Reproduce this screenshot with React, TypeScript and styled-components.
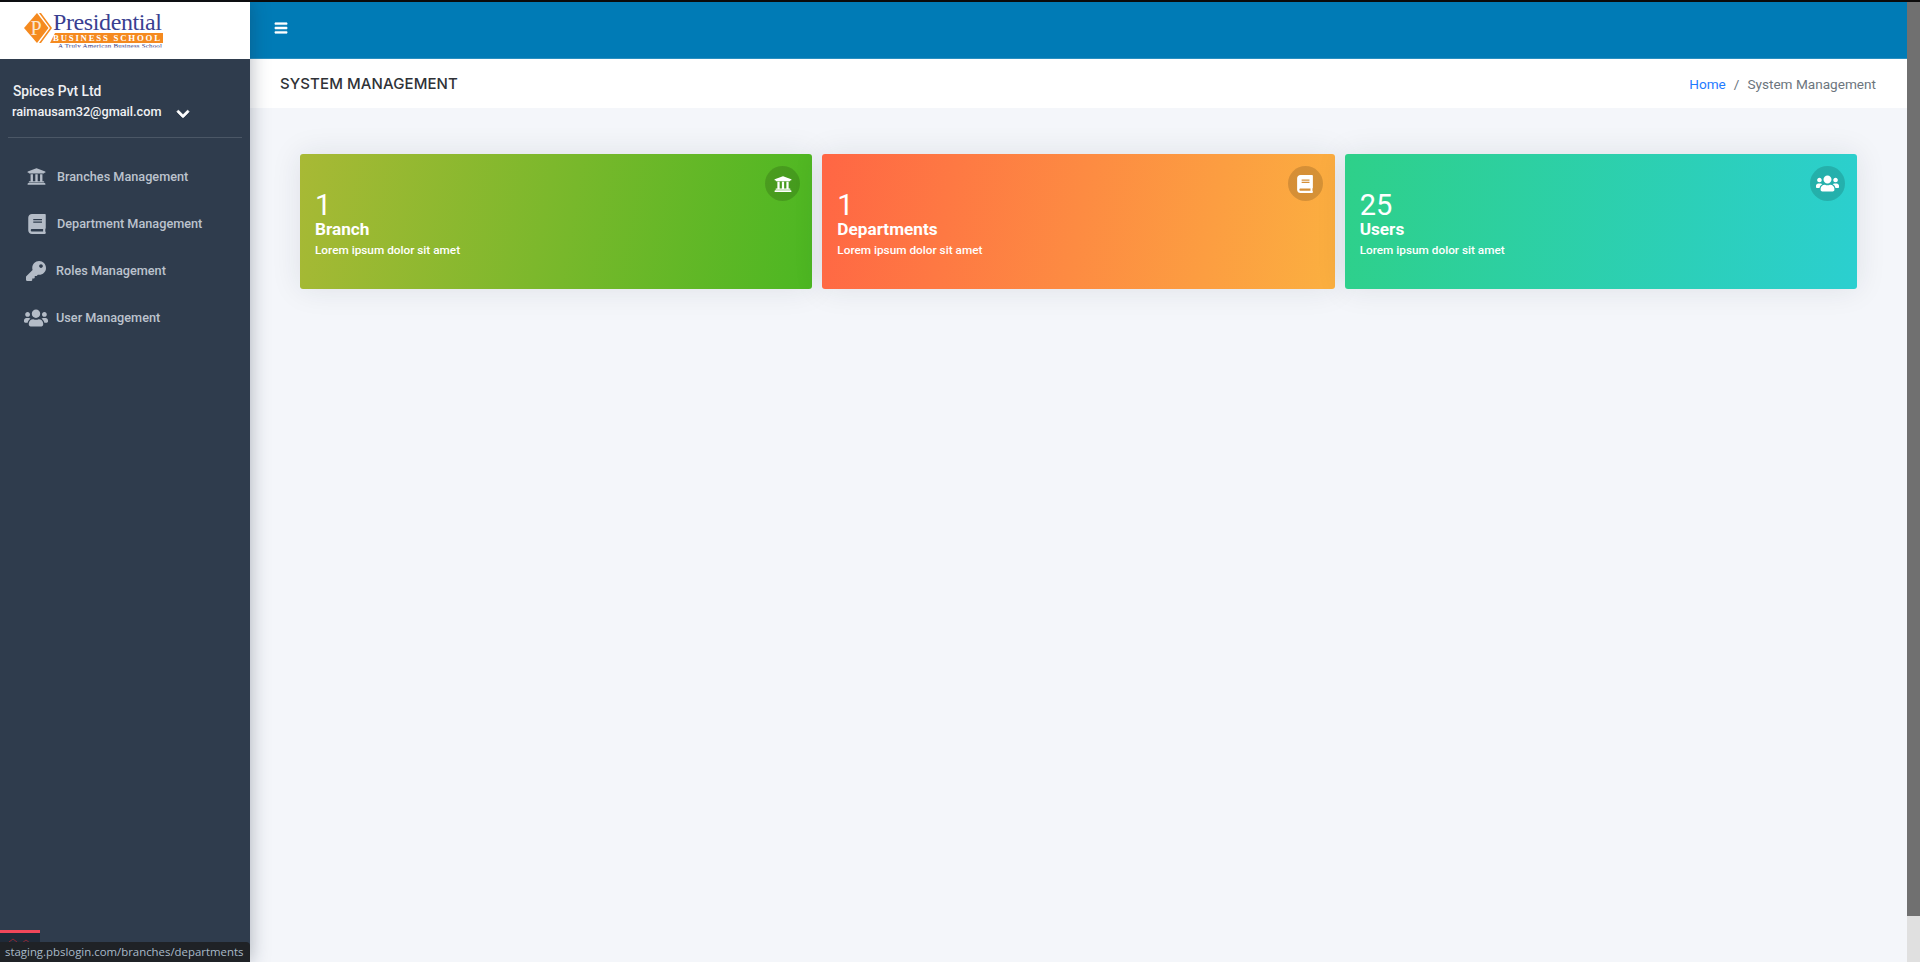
import React from "react";
import styled, { createGlobalStyle } from "styled-components";
import { FaBars, FaBook, FaChevronDown, FaKey, FaUniversity, FaUsers } from "react-icons/fa";
import type { IconType } from "react-icons";

const Global = createGlobalStyle`
  html, body { margin: 0; padding: 0; height: 100%; overflow: hidden; }
  body { font-family: "Roboto", "Liberation Sans", sans-serif; background: #000; }
  * { box-sizing: border-box; }
`;

const Frame = styled.div`
  height: 962px;
  display: flex;
  flex-direction: column;
  border-top: 2px solid #0b0b0b;
  position: relative;
`;
const Body = styled.div`
  flex: 1;
  display: flex;
  min-height: 0;
`;
const Sidebar = styled.aside`
  width: 250px;
  flex: none;
  background: #2f3c4d;
  box-shadow: 0 0 18px rgba(30, 40, 60, 0.35);
  position: relative;
  z-index: 2;
  display: flex;
  flex-direction: column;
`;
const LogoBar = styled.div`
  height: 57px;
  background: #fff;
  flex: none;
`;
const UserPanel = styled.div`
  margin: 0 8px;
  padding: 24px 4px 0 4px;
  height: 79px;
  border-bottom: 1px solid #4b5766;
  flex: none;
`;
const Company = styled.div`
  color: #eef0f3;
  font-size: 13.8px;
  font-weight: 500;
  line-height: 16px;
  padding-left: 1px;
`;
const EmailRow = styled.div`
  display: flex;
  align-items: center;
  margin-top: 3px;
  color: #f1f2f4;
  font-size: 12.7px;
  font-weight: 500;
  line-height: 16px;
  svg { margin-left: 15px; margin-top: 5px; font-size: 14px; color: #fff; stroke: #fff; stroke-width: 30px; }
`;
const Menu = styled.nav`
  padding-top: 15px;
  display: flex;
  flex-direction: column;
`;
const MenuItem = styled.a<{ $iconLeft: number; $gap: number }>`
  height: 47px;
  display: flex;
  align-items: center;
  padding-left: ${(p) => p.$iconLeft}px;
  gap: ${(p) => p.$gap}px;
  color: #bcc3cd;
  font-size: 12.7px;
  font-weight: 500;
`;
const MenuIcon = styled.span<{ $size: number }>`
  display: flex;
  font-size: ${(p) => p.$size}px;
  color: #b4bcc7;
`;

const Main = styled.main`
  flex: 1;
  min-width: 0;
  background: #f4f6fa;
  display: flex;
  flex-direction: column;
`;
const TopBar = styled.header`
  height: 57px;
  flex: none;
  background: #007bb6;
  border-bottom: 1px solid #2a8fc0;
  display: flex;
  align-items: center;
  padding-left: 24px;
  color: #fff;
  font-size: 14px;
  svg { display: block; margin-top: -4px; stroke: #fff; stroke-width: 20px; }
`;
const SubHeader = styled.div`
  height: 49px;
  flex: none;
  background: #fff;
  display: flex;
  align-items: center;
  justify-content: space-between;
  padding: 0 31px 0 30px;
`;
const PageTitle = styled.h1`
  margin: 0;
  font-family: "Inter", "Liberation Sans", sans-serif;
  font-size: 15px;
  font-weight: 500;
  color: #2f3237;
  letter-spacing: 0.1px;
`;
const Crumbs = styled.div`
  display: flex;
  gap: 8px;
  font-size: 13.6px;
  color: #6c757d;
`;
const CrumbLink = styled.a`
  color: #1f7bff;
`;
const Cards = styled.section`
  display: grid;
  grid-template-columns: repeat(3, 1fr);
  gap: 10px;
  padding: 46px 50px 0;
`;
const Card = styled.article<{ $from: string; $to: string }>`
  height: 135px;
  border-radius: 3px;
  background: linear-gradient(100deg, ${(p) => p.$from}, ${(p) => p.$to});
  box-shadow: 0 0 30px rgba(30, 35, 60, 0.1);
  color: #fff;
  padding: 37px 15px 0;
  position: relative;
`;
const Count = styled.div`
  font-size: 29px;
  line-height: 28px;
  font-weight: 400;
`;
const CardTitle = styled.div`
  font-size: 17.2px;
  line-height: 20px;
  font-weight: 700;
`;
const CardText = styled.div`
  font-size: 11.8px;
  line-height: 16px;
  font-weight: 500;
  margin-top: 3px;
`;
const Badge = styled.div`
  position: absolute;
  top: 12px;
  right: 12px;
  width: 35px;
  height: 35px;
  border-radius: 50%;
  background: rgba(0, 0, 0, 0.15);
  display: flex;
  align-items: center;
  justify-content: center;
`;
const BadgeIcon = styled.span<{ $size: number }>`
  display: flex;
  font-size: ${(p) => p.$size}px;
`;
const Scrollbar = styled.div`
  width: 13px;
  flex: none;
  background: #e0e0e0;
`;
const Thumb = styled.div`
  height: 914px;
  background: #707070;
`;
const LinkHint = styled.div`
  position: absolute;
  left: 0;
  bottom: 0;
  width: 250px;
  height: 20px;
  z-index: 5;
  background: #1f2226;
  border-top-right-radius: 4px;
  color: #a9bac9;
  font-family: "Open Sans", "Liberation Sans", sans-serif;
  font-size: 11.4px;
  line-height: 20px;
  padding-left: 5px;
  white-space: nowrap;
`;
const Widget = styled.div`
  position: absolute;
  left: 0;
  bottom: 0;
  width: 40px;
  height: 32px;
  z-index: 4;
  background: #1f2a38;
  border-top: 3px solid #f0475a;
  svg { display: block; margin: 5px 0 0 8px; }
`;

const Logo = () => (
  <svg width="250" height="57" viewBox="0 0 250 57" aria-label="Presidential Business School">
    <polygon points="24,26 37,11 48.5,26 37,41" fill="#f58a1f" />
    <polygon points="39,11 41,11 52,26 41,41 39,41 50,26" fill="#f58a1f" />
    <text x="30.5" y="33" fontFamily="Liberation Serif" fontSize="20" fill="#fbe6cf">P</text>
    <text x="53" y="28" fontFamily="Liberation Serif" fontSize="24" fill="#3a3f91" textLength="109">Presidential</text>
    <polygon points="55,31 163,31 163,41 50,41" fill="#f58a1f" />
    <text x="53" y="39.2" fontFamily="Liberation Serif" fontWeight="700" fontSize="8.8" fill="#fff" textLength="107">BUSINESS SCHOOL</text>
    <text x="58" y="46" fontFamily="Liberation Serif" fontSize="7" fill="#2f3580" textLength="104">A Truly American Business School</text>
    <rect x="50" y="45.5" width="120" height="4" fill="#fff" />
  </svg>
);

const menu: { label: string; Icon: IconType; left: number; gap: number; size: number }[] = [
  { label: "Branches Management", Icon: FaUniversity, left: 27, gap: 11, size: 19 },
  { label: "Department Management", Icon: FaBook, left: 27, gap: 10, size: 20 },
  { label: "Roles Management", Icon: FaKey, left: 26, gap: 10, size: 20 },
  { label: "User Management", Icon: FaUsers, left: 24, gap: 8, size: 24 },
];

const cards: { count: string; title: string; Icon: IconType; size: number; from: string; to: string }[] = [
  { count: "1", title: "Branch", Icon: FaUniversity, size: 18, from: "#a8b935", to: "#4cb722" },
  { count: "1", title: "Departments", Icon: FaBook, size: 18, from: "#ff6644", to: "#fbb040" },
  { count: "25", title: "Users", Icon: FaUsers, size: 23, from: "#2ed089", to: "#2bcfd0" },
];

export default function App() {
  return (
    <Frame>
      <Global />
      <Body>
        <Sidebar>
          <LogoBar>
            <Logo />
          </LogoBar>
          <UserPanel>
            <Company>Spices Pvt Ltd</Company>
            <EmailRow>
              raimausam32@gmail.com
              <FaChevronDown />
            </EmailRow>
          </UserPanel>
          <Menu>
            {menu.map(({ label, Icon, left, gap, size }) => (
              <MenuItem key={label} $iconLeft={left} $gap={gap}>
                <MenuIcon $size={size}>
                  <Icon />
                </MenuIcon>
                {label}
              </MenuItem>
            ))}
          </Menu>
        </Sidebar>
        <Main>
          <TopBar>
            <FaBars />
          </TopBar>
          <SubHeader>
            <PageTitle>SYSTEM MANAGEMENT</PageTitle>
            <Crumbs>
              <CrumbLink>Home</CrumbLink>
              <span>/</span>
              <span>System Management</span>
            </Crumbs>
          </SubHeader>
          <Cards>
            {cards.map(({ count, title, Icon, size, from, to }) => (
              <Card key={title} $from={from} $to={to}>
                <Count>{count}</Count>
                <CardTitle>{title}</CardTitle>
                <CardText>Lorem ipsum dolor sit amet</CardText>
                <Badge>
                  <BadgeIcon $size={size}>
                    <Icon />
                  </BadgeIcon>
                </Badge>
              </Card>
            ))}
          </Cards>
        </Main>
        <Scrollbar>
          <Thumb />
        </Scrollbar>
      </Body>
      <Widget>
        <svg width="24" height="14" viewBox="0 0 24 14" fill="none" stroke="#8c2733" strokeWidth="1">
          <path d="M1 4l4-3 4 3v9H1zM14 5l4-3 4 3v8h-8z" />
        </svg>
      </Widget>
      <LinkHint>staging.pbslogin.com/branches/departments</LinkHint>
    </Frame>
  );
}
